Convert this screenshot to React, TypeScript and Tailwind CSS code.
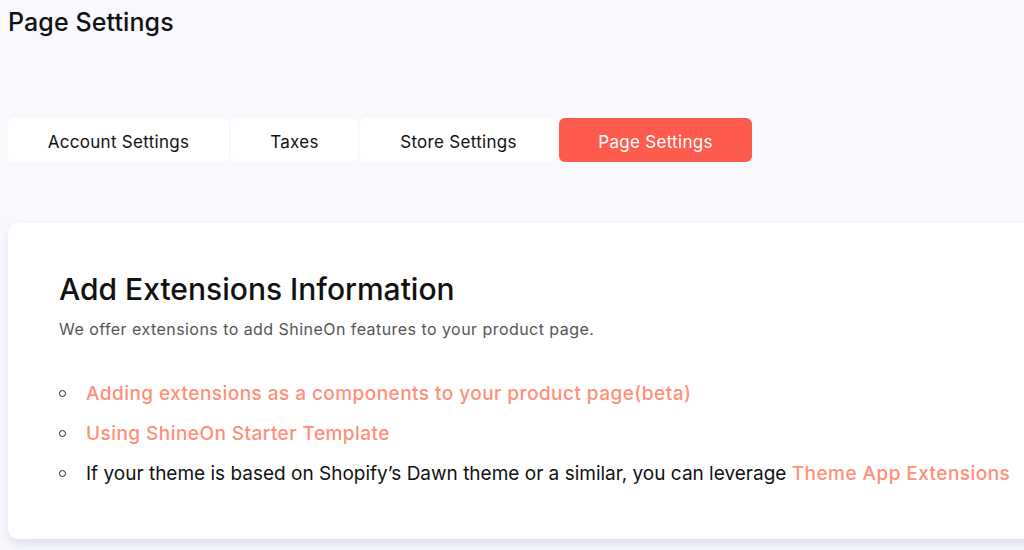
const tabs = ["Account Settings", "Taxes", "Store Settings", "Page Settings"];

const tabWidths = ["w-[221px]", "w-[127px]", "w-[197px]", "w-[193px]"];

const Bullet = () => (
  <span className="mr-[20px] h-[7px] w-[7px] shrink-0 rounded-full border border-[#222222]" />
);

const App = () => {
  const active = "Page Settings";

  return (
    <div className="min-h-[550px] bg-[#f8f8fd] font-['Inter',sans-serif] text-[#111111] overflow-hidden">
      <div className="px-2 pt-[6px]">
        <h1 className="text-[25px] leading-[32px] font-medium tracking-[0.1px]">Page Settings</h1>

        <div className="mt-[80px] flex gap-[2px]">
          {tabs.map((tab, idx) => (
            <button
              key={tab}
              className={`${tabWidths[idx]} h-[44px] pt-[6px] rounded-[6px] text-[17px] tracking-[0.3px] ${
                tab === active ? "bg-[#fd5b4d] text-white" : "bg-white text-[#111111]"
              }`}
            >
              {tab}
            </button>
          ))}
        </div>

        <div className="mt-[61px] w-[1040px] rounded-[10px] bg-white pl-[51px] pt-[46px] pb-[52px] shadow-[0_6px_8px_rgba(200,205,230,0.5)]">
          <h2 className="text-[30px] leading-[40px] font-medium tracking-[0px]">Add Extensions Information</h2>
          <p className="mt-[9px] text-[16px] leading-[22px] tracking-[0.45px] text-[#555555]">
            We offer extensions to add ShineOn features to your product page.
          </p>

          <ul className="mt-[40px] flex flex-col gap-[13px] text-[19px] leading-[27px]">
            <li className="flex items-center">
              <Bullet />
              <span className="text-[#ff8f79] font-medium tracking-[0.45px]">
                Adding extensions as a components to your product page(beta)
              </span>
            </li>
            <li className="flex items-center">
              <Bullet />
              <span className="text-[#ff8f79] font-medium tracking-[0.45px]">Using ShineOn Starter Template</span>
            </li>
            <li className="flex items-center">
              <Bullet />
              <span>
                If your theme is based on Shopify’s Dawn theme or a similar, you can leverage{" "}
                <span className="text-[#ff8f79] font-medium tracking-[0.45px]">Theme App Extensions</span>
              </span>
            </li>
          </ul>
        </div>
      </div>
    </div>
  );
};

export default App;
